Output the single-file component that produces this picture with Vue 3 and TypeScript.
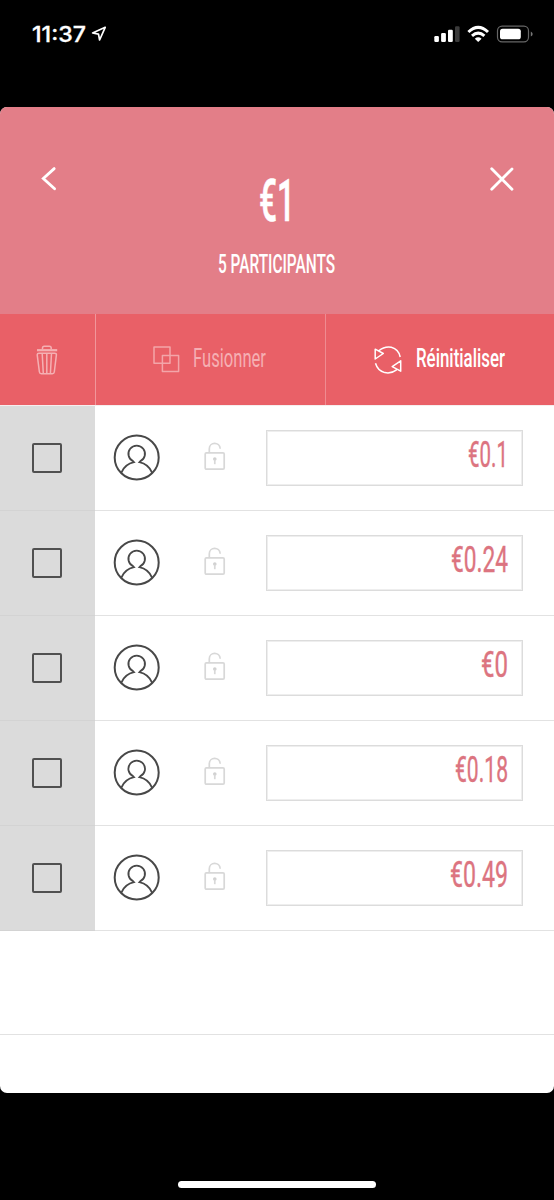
<script setup lang="ts">
interface Participant {
  id: number
  amount: string
  width: number
}

const participants: Participant[] = [
  { id: 1, amount: '€0.1', width: 40 },
  { id: 2, amount: '€0.24', width: 57 },
  { id: 3, amount: '€0', width: 27 },
  { id: 4, amount: '€0.18', width: 53 },
  { id: 5, amount: '€0.49', width: 58 },
]
</script>

<template>
  <div class="phone">
    <div class="status">
      <div class="clock">
        <svg class="time" width="56" height="24"><text x="0" y="18" textLength="54" lengthAdjust="spacingAndGlyphs">11:37</text></svg>
        <svg class="arrow" width="16" height="16" viewBox="0 0 16 16"><path d="M14.2 1.3 L1.6 7 L7.5 8.1 L8.6 14 Z" /></svg>
      </div>
      <svg class="indicators" width="100" height="18" viewBox="434 25 100 18">
        <g fill="#fff">
          <rect x="434.3" y="36" width="4.6" height="6" rx="1.2" />
          <rect x="441.1" y="33" width="4.8" height="9" rx="1.2" />
          <rect x="448" y="29.8" width="4.8" height="12.2" rx="1.2" />
          <rect x="455" y="26.3" width="4.6" height="15.7" rx="1.2" fill="#3b3b3b" />
          <path d="M474.8 38.7 Q478.2 35.8 481.6 38.7 L478.2 42 Z" />
          <rect x="500" y="28.7" width="20.8" height="10.6" rx="2.6" />
        </g>
        <path class="wifi" d="M468.4 32 Q478.2 22.7 488 32 M472 35.9 Q478.2 30.3 484.4 35.9" />
        <rect class="battery" x="497.5" y="26.2" width="31" height="15.6" rx="4.6" />
        <path d="M530.8 31.4 Q534.6 34 530.8 36.6 Z" fill="#777" />
      </svg>
    </div>

    <main class="panel">
      <header class="header">
        <svg class="nav" width="26" height="26" viewBox="0 0 26 26"><path d="M18.2 2.6 L7.3 12.5 L18.6 22.8" /></svg>
        <div class="summary">
          <svg class="total" width="34" height="50"><text x="0" y="47" textLength="36" lengthAdjust="spacingAndGlyphs">€1</text></svg>
          <svg class="count" width="117" height="26"><text x="1" y="22.5" textLength="117" lengthAdjust="spacingAndGlyphs">5 PARTICIPANTS</text></svg>
        </div>
        <svg class="nav" width="26" height="26" viewBox="0 0 26 26"><path d="M2.7 2.7 L23 23.3 M23 3.1 L2.7 23.3" /></svg>
      </header>

      <nav class="toolbar">
        <div class="tool trash">
          <svg width="22" height="30" viewBox="0 0 22 30">
            <path d="M1 5.2 H21.2" stroke-width="2.2" />
            <path d="M6.5 4.2 V3 Q6.5 1.2 8.3 1.2 H13.4 Q15.2 1.2 15.2 3 V4.2 M1.2 9.8 Q1.2 8.2 3 8.2 H18.7 Q20.5 8.2 20.4 9.8 L18.3 27 Q18.1 28.7 16.3 28.7 H5.3 Q3.6 28.7 3.4 27 Z M6.2 8.5 L7.3 28.5 M10.8 8.5 V28.5 M15.5 8.5 L14.4 28.5" />
          </svg>
        </div>
        <div class="tool merge">
          <svg width="27" height="27" viewBox="0 0 27 27"><path d="M1 1 H17 V17.3 H1 Z M9.4 9.4 H25.6 V25.5 H9.4 Z" /></svg>
          <svg class="label" width="73" height="26"><text x="0" y="19.5" textLength="73" lengthAdjust="spacingAndGlyphs">Fusionner</text></svg>
        </div>
        <div class="tool reset">
          <svg width="28" height="28" viewBox="0 0 28 28"><path d="M4.7 4.9 Q10.5 .1 17.3 1.3 Q24.6 3.2 26.2 11 M1.5 17.2 Q3.6 24.6 10.8 26.6 Q17.4 27.9 22.6 23.9 M1.2 3.2 L9.3 7.5 L1.2 13 Z M26.7 14.8 V25.2 L18.2 20.7 Z" /></svg>
          <svg class="label" width="90" height="26"><text x="0" y="19.5" textLength="89" lengthAdjust="spacingAndGlyphs">Réinitialiser</text></svg>
        </div>
      </nav>

      <section class="list">
        <div v-for="p in participants" :key="p.id" class="row">
          <div class="select"><span class="box"></span></div>
          <svg class="avatar" width="48" height="48" viewBox="0 0 48 48">
            <circle cx="23.7" cy="23.5" r="22" stroke-width="2" />
            <path d="M8.2 38.8 Q12 30.1 21 28.2 L20.3 27.4 A8.3 8.3 0 1 1 27.1 27.4 L26.4 28.2 Q35.4 30.1 39.2 38.8" stroke-width="1.8" />
          </svg>
          <svg class="lock" width="22" height="29" viewBox="0 0 22 29">
            <rect x="1.2" y="10.8" width="19" height="16.4" rx="1.2" />
            <path d="M5.3 10.5 V6.7 C5.3 -.3 15.8 -.3 16.2 6.7" />
            <circle class="keyhole" cx="10.8" cy="17" r="1.8" />
            <path d="M10.8 17.5 V22.2" />
          </svg>
          <div class="field">
            <svg class="amount" :width="p.width" height="36"><text x="0" y="31.5" :textLength="p.width" lengthAdjust="spacingAndGlyphs">{{ p.amount }}</text></svg>
          </div>
        </div>
        <div class="row empty"></div>
      </section>
    </main>

    <footer class="footer"><span class="home"></span></footer>
  </div>
</template>

<style>
body {
  margin: 0;
  background: #000;
}
</style>

<style scoped>
.phone {
  box-sizing: border-box;
  width: 554px;
  height: 1200px;
  display: flex;
  flex-direction: column;
  background: #000;
  overflow: hidden;
  font-family: Roboto, "Liberation Sans", sans-serif;
}
svg {
  display: block;
  flex: none;
  fill: none;
  overflow: visible;
}
.status {
  box-sizing: border-box;
  height: 107px;
  flex: none;
  display: flex;
  justify-content: space-between;
  align-items: flex-start;
  padding: 24px 20px 0 32px;
}
.clock {
  display: flex;
  gap: 3px;
}
.time text {
  font: 500 21.5px Inter, sans-serif;
  fill: #fff;
  stroke: #fff;
  stroke-width: 0.3;
}
.arrow {
  margin-top: 2px;
  stroke: #fff;
  stroke-width: 1.7;
  stroke-linejoin: round;
}
.indicators {
  margin-top: 1px;
}
.wifi {
  stroke: #fff;
  stroke-width: 3;
}
.battery {
  stroke: #666;
  stroke-width: 1.2;
}
.panel {
  height: 985.5px;
  flex: none;
  border-radius: 7px;
  overflow: hidden;
  background: #fff;
}
.header {
  box-sizing: border-box;
  height: 207px;
  display: flex;
  justify-content: space-between;
  align-items: flex-start;
  padding: 59px 39px 0 36px;
  background: #e37e88;
}
.nav {
  stroke: #fff;
  stroke-width: 2.8;
  stroke-linecap: round;
}
.summary {
  display: flex;
  flex-direction: column;
  align-items: center;
  gap: 26px;
  padding-top: 8px;
}
.total text {
  font-size: 59px;
  font-weight: 500;
  fill: #fff;
  stroke: #fff;
  stroke-width: 0.6;
}
.count text {
  font-size: 26px;
  font-weight: 500;
  fill: #fff;
}
.toolbar {
  height: 91px;
  display: flex;
  background: #e96067;
}
.tool {
  box-sizing: border-box;
  display: flex;
  align-items: center;
  stroke: #fff;
  stroke-width: 1.5;
  stroke-linejoin: round;
}
.trash {
  width: 96px;
  justify-content: center;
  padding-right: 2px;
  border-right: 1px solid #f1969b;
  stroke: #f5b0b3;
}
.merge {
  width: 230px;
  padding-left: 57px;
  gap: 13px;
  border-right: 1px solid #ef8b91;
  stroke: #f3a5a9;
}
.reset {
  flex: 1;
  padding-left: 48px;
  gap: 14px;
}
.label text {
  font-size: 26px;
  stroke: none;
  fill: #f5afb3;
}
.reset .label text {
  fill: #fff;
  font-weight: 500;
}
.list {
  border-top: 1px solid #f6eeee;
}
.row {
  box-sizing: border-box;
  height: 105px;
  display: flex;
  align-items: center;
  border-bottom: 1px solid #e2e2e2;
}
.empty {
  height: 104px;
}
.select {
  box-sizing: border-box;
  width: 95px;
  height: 105px;
  flex: none;
  display: flex;
  align-items: center;
  justify-content: center;
  padding-right: 1px;
  background: #dbdbdb;
  box-shadow: inset 0 -1px #d3d3d3;
}
.box {
  box-sizing: border-box;
  width: 30px;
  height: 30px;
  border: 2px solid #505050;
  border-radius: 2px;
}
.avatar {
  margin: 0 0 0 18px;
  stroke: #484848;
}
.lock {
  margin: 0 0 3px 43px;
  stroke: #d8d8d8;
  stroke-width: 1.7;
}
.keyhole {
  fill: #d0d0d0;
  stroke: none;
}
.field {
  box-sizing: border-box;
  width: 257px;
  height: 56px;
  margin-left: 40px;
  padding: 4px 14px 0 0;
  display: flex;
  justify-content: flex-end;
  border: 1px solid #dcdcdc;
  box-shadow: inset 0 0 0 1px #eee;
}
.amount text {
  font-size: 36px;
  fill: #dc7480;
  stroke: #dc7480;
  stroke-width: 0.4;
}
.footer {
  flex: 1;
  display: flex;
  justify-content: center;
  align-items: flex-start;
}
.home {
  width: 198px;
  height: 7.5px;
  margin-top: 88px;
  border-radius: 4px;
  background: #fff;
}
</style>
